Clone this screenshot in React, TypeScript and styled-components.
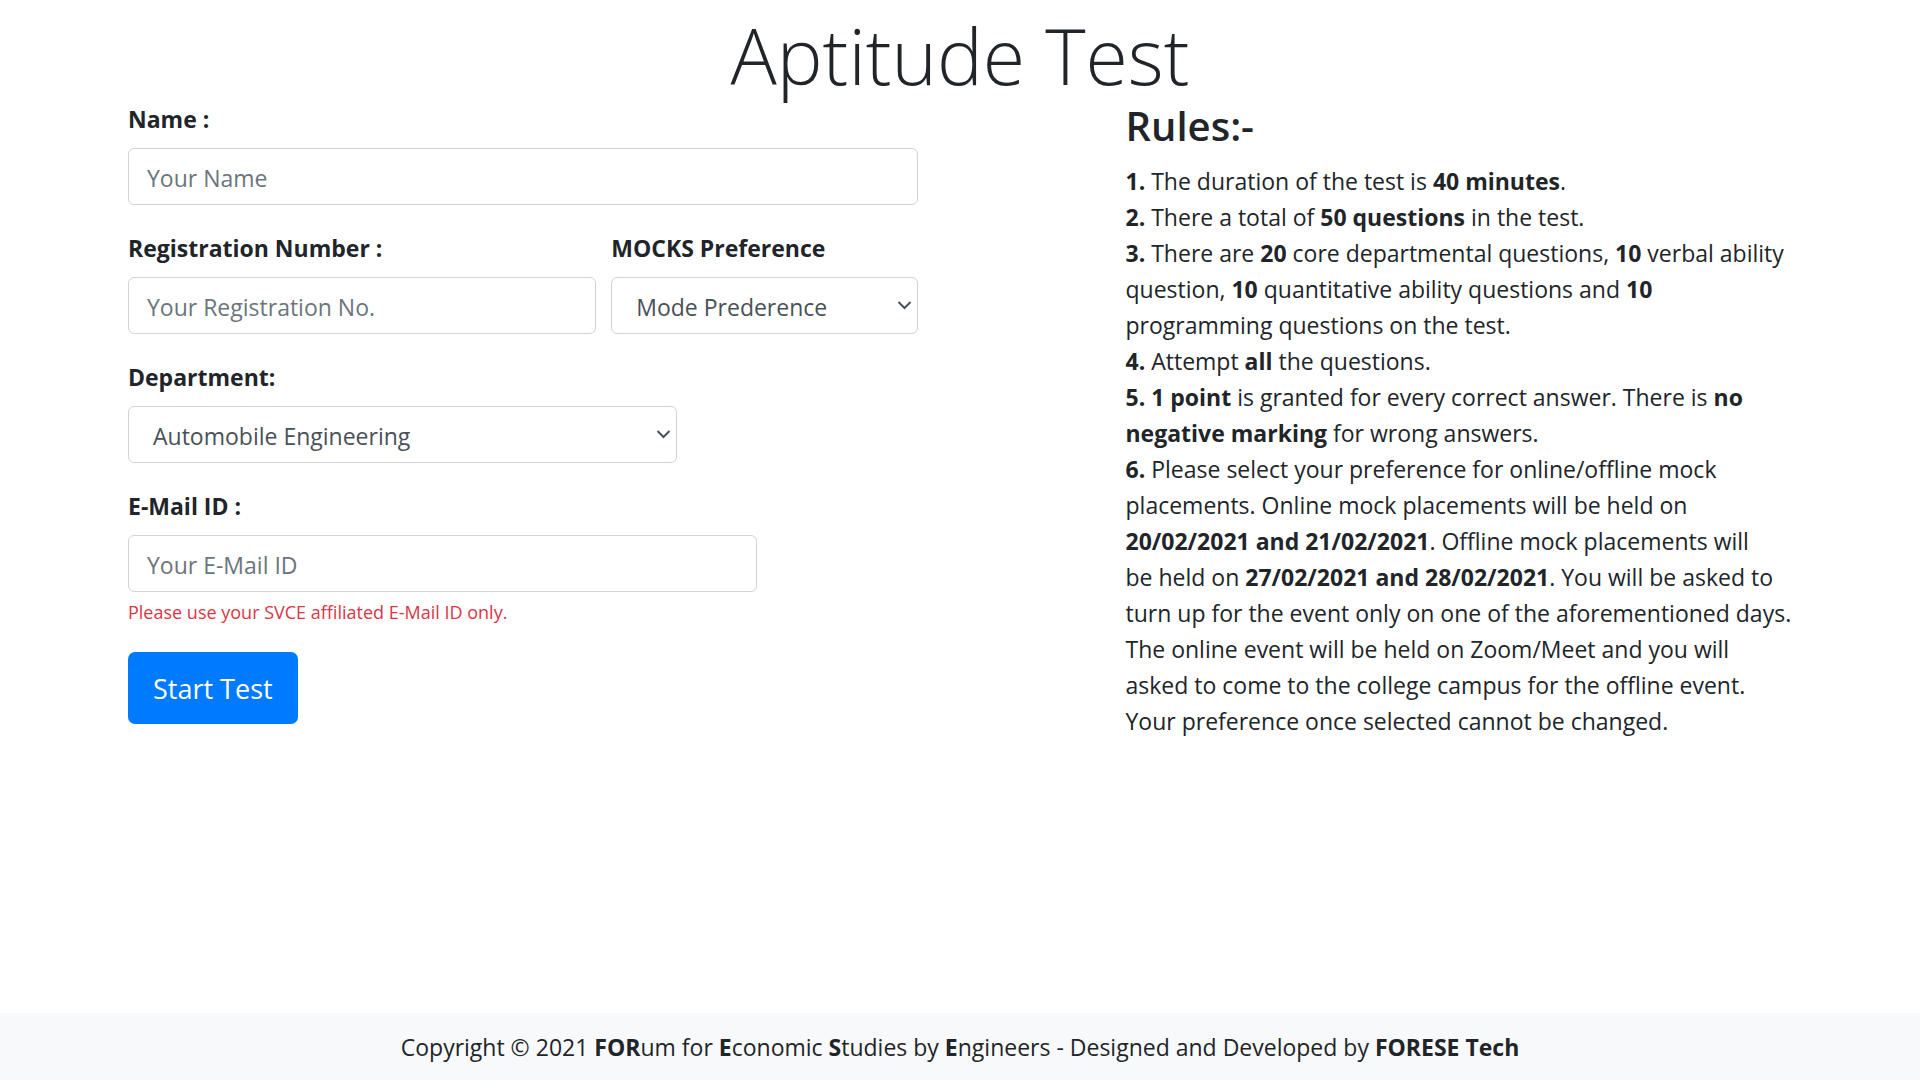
import React from "react";
import styled, { createGlobalStyle } from "styled-components";

const GlobalStyle = createGlobalStyle`
  *, *::before, *::after { box-sizing: border-box; }
  body {
    margin: 0;
    background: #fff;
    color: #212529;
    font-family: "Segoe UI", "Open Sans", "Noto Sans", sans-serif;
    font-size: 23px;
    line-height: 36px;
  }
  b { font-weight: 700; }
`;

const Page = styled.div`
  display: flex;
  flex-direction: column;
  min-height: 100vh;
`;

const Title = styled.h1`
  margin: 0;
  padding-top: 11px;
  font-size: 77px;
  font-weight: 300;
  line-height: 90px;
  text-align: center;
`;

const Main = styled.main`
  display: grid;
  grid-template-columns: minmax(0, 7fr) minmax(0, 5fr);
  width: 100%;
  max-width: 1710px;
  margin: 0 auto;
  padding-bottom: 48px;
`;

const Form = styled.form`
  display: grid;
  grid-template-columns: repeat(12, minmax(0, 1fr));
  gap: 25px 15px;
  align-content: start;
  padding: 0 23px;
`;

const Field = styled.div<{ $span: number; $inline?: boolean }>`
  display: flex;
  flex-direction: column;
  grid-column: ${(p) => (p.$inline ? "auto" : "1")} / span ${(p) => p.$span};
`;

const Label = styled.label`
  margin-bottom: 11px;
  font-weight: 700;
`;

const Input = styled.input`
  width: 100%;
  height: 57px;
  padding: 10px 18px 8px;
  border: 1px solid #ced4da;
  border-radius: 6px;
  background: #fff;
  color: #495057;
  font: inherit;
  &::placeholder { color: #6c757d; opacity: 1; }
`;

const SelectBox = styled.div`
  position: relative;
`;

const Select = styled.select`
  display: block;
  width: 100%;
  height: 57px;
  padding: 10px 24px 8px;
  border: 1px solid #ced4da;
  border-radius: 6px;
  background: #fff;
  color: #495057;
  font: inherit;
  appearance: none;
`;

const Arrow = styled.svg`
  position: absolute;
  top: 24px;
  right: 6px;
  pointer-events: none;
`;

const Hint = styled.small`
  padding-top: 6px;
  color: #dc3545;
  font-size: 18px;
  line-height: 29px;
`;

const StartButton = styled.button`
  grid-column: 1 / -1;
  justify-self: start;
  height: 72px;
  padding: 2px 25px 0;
  border: 0;
  border-radius: 7px;
  background: #007bff;
  color: #fff;
  font: inherit;
  font-size: 27px;
`;

const Rules = styled.section`
  padding: 0 23px;
`;

const RulesTitle = styled.h3`
  margin: 0 0 12px;
  font-size: 40px;
  font-weight: 600;
  line-height: 50px;
`;

const Rule = styled.p`
  margin: 0;
`;

const Footer = styled.footer`
  margin-top: auto;
  padding: 16px 16px 15px;
  background: #f8f9fa;
  text-align: center;
`;

function Dropdown({ id, options }: { id: string; options: string[] }) {
  return (
    <SelectBox>
      <Select id={id}>
        {options.map((o) => (
          <option key={o}>{o}</option>
        ))}
      </Select>
      <Arrow width="15" height="10" viewBox="0 0 15 10" fill="none" aria-hidden="true">
        <path d="M1.5 1L7.5 7L13.5 1" stroke="#495057" strokeWidth="2" />
      </Arrow>
    </SelectBox>
  );
}

export default function App() {
  return (
    <>
      <GlobalStyle />
      <Page>
        <Title>Aptitude Test</Title>
        <Main>
          <Form onSubmit={(e) => e.preventDefault()}>
            <Field $span={10}>
              <Label htmlFor="name">Name :</Label>
              <Input id="name" type="text" placeholder="Your Name" />
            </Field>
            <Field $span={6}>
              <Label htmlFor="regno">Registration Number :</Label>
              <Input id="regno" type="text" placeholder="Your Registration No." />
            </Field>
            <Field $span={4} $inline>
              <Label htmlFor="mode">MOCKS Preference</Label>
              <Dropdown id="mode" options={["Mode Prederence"]} />
            </Field>
            <Field $span={7}>
              <Label htmlFor="dept">Department:</Label>
              <Dropdown id="dept" options={["Automobile Engineering"]} />
            </Field>
            <Field $span={8}>
              <Label htmlFor="email">E-Mail ID :</Label>
              <Input id="email" type="email" placeholder="Your E-Mail ID" />
              <Hint>Please use your SVCE affiliated E-Mail ID only.</Hint>
            </Field>
            <StartButton type="submit">Start Test</StartButton>
          </Form>
          <Rules>
            <RulesTitle>Rules:-</RulesTitle>
            <Rule><b>1.</b> The duration of the test is <b>40 minutes</b>.</Rule>
            <Rule><b>2.</b> There a total of <b>50 questions</b> in the test.</Rule>
            <Rule>
              <b>3.</b> There are <b>20</b> core departmental questions, <b>10</b> verbal ability
              question, <b>10</b> quantitative ability questions and <b>10</b> programming
              questions on the test.
            </Rule>
            <Rule><b>4.</b> Attempt <b>all</b> the questions.</Rule>
            <Rule>
              <b>5. 1 point</b> is granted for every correct answer. There is{" "}
              <b>no negative marking</b> for wrong answers.
            </Rule>
            <Rule>
              <b>6.</b> Please select your preference for online/offline mock placements. Online
              mock placements will be held on <b>20/02/2021 and 21/02/2021</b>. Offline mock
              placements will be&nbsp;held on <b>27/02/2021 and 28/02/2021</b>. You will be asked to
              turn up for the event only on one of the aforementioned days. The online event will
              be held on Zoom/Meet and you will asked to come to the college campus for the
              offline event. Your preference once selected cannot be changed.
            </Rule>
          </Rules>
        </Main>
        <Footer>
          Copyright © 2021 <b>FOR</b>um for <b>E</b>conomic <b>S</b>tudies by <b>E</b>ngineers -
          Designed and Developed by <b>FORESE Tech</b>
        </Footer>
      </Page>
    </>
  );
}
